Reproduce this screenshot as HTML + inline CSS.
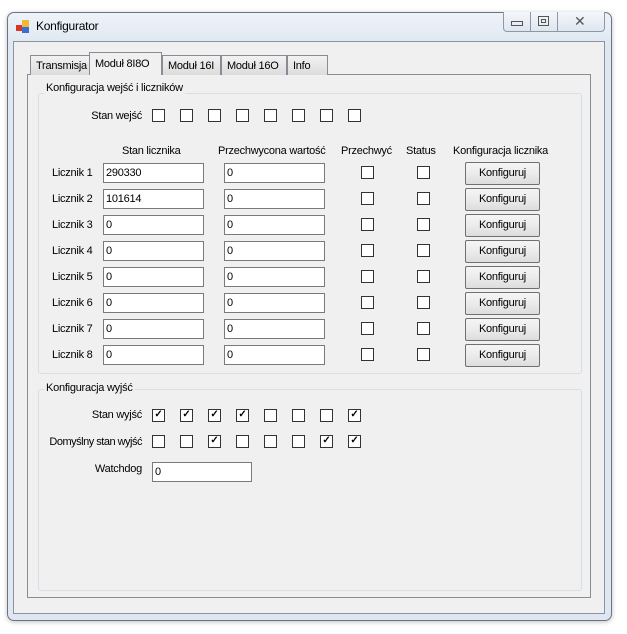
<!DOCTYPE html>
<html><head><meta charset="utf-8"><style>
*{margin:0;padding:0;box-sizing:border-box}
body{width:627px;height:634px;background:#fff;font-family:"Liberation Sans",sans-serif;font-size:11px;letter-spacing:-0.25px;color:#000;position:relative;overflow:hidden}
.a{position:absolute;white-space:nowrap}
.win{left:7px;top:12px;width:605px;height:609px;border:1px solid #6b7480;border-radius:7px;background:linear-gradient(#eef3f9,#dfe8f2 30px,#dfe8f2);box-shadow:0 1px 5px rgba(0,0,0,.25)}
.client{left:13px;top:41px;width:592px;height:573px;border:1px solid #8d949c;background:#f0f0f0}
.panel{left:27px;top:74px;width:564px;height:524px;border:1px solid #898c95;background:#f0f0f0}
.gb{border:1px solid #d5dfe5;border-radius:3px}
.gt{background:#f0f0f0;padding:0 2px;line-height:13px}
.tab{top:55px;height:20px;border:1px solid #898c95;border-bottom:none;background:linear-gradient(#f2f2f2,#dcdcdc);padding:4px 0 0 5px;line-height:13px}
.sel{top:52px;height:23px;background:#f0f0f0;padding-top:5px}
.cb{width:13px;height:13px;border:1px solid #333;background:#fff;font-size:10px;line-height:10px;text-align:center;font-weight:bold}
.tb{height:20px;border:1px solid #7a7a7a;background:#fff;padding:2px 0 0 2px;line-height:14px}
.bt{width:75px;height:23px;border:1px solid #707070;background:linear-gradient(#f5f5f5,#ebebeb 50%,#dddddd);text-align:center;line-height:20px;border-radius:2px}
.lb{line-height:13px;text-align:right}
</style></head><body>
<div class="a win"></div>
<div class="a" style="left:16px;top:20px;width:14px;height:14px">
<div class="a" style="left:0;top:5px;width:6px;height:6px;background:#d9352a"></div>
<div class="a" style="left:6px;top:0;width:7px;height:7px;background:#f1b931"></div>
<div class="a" style="left:6px;top:7px;width:7px;height:6px;background:#3a6fd0"></div>
</div>
<div class="a" style="left:36px;top:19px;font-size:12px;line-height:15px">Konfigurator</div>
<div class="a" style="left:503px;top:12px;width:102px;height:20px;border:1px solid #8e97a3;border-top:none;border-radius:0 0 4px 4px;background:linear-gradient(#f4f7fb,#dfe6ef)"></div>
<div class="a" style="left:530px;top:12px;width:1px;height:19px;background:#8e97a3"></div>
<div class="a" style="left:557px;top:12px;width:1px;height:19px;background:#8e97a3"></div>
<div class="a" style="left:511px;top:21px;width:12px;height:5px;border:1px solid #555"></div>
<div class="a" style="left:538px;top:16px;width:11px;height:10px;border:1px solid #555"><div class="a" style="left:2px;top:2px;width:5px;height:4px;border:1px solid #555"></div></div>
<div class="a" style="left:574px;top:13px;font-size:14px;color:#555;line-height:16px">✕</div>
<div class="a client"></div>
<div class="a panel"></div>
<div class="a tab" style="left:30px;width:60px">Transmisja</div>
<div class="a tab" style="left:162px;width:59px">Moduł 16I</div>
<div class="a tab" style="left:221px;width:66px">Moduł 16O</div>
<div class="a tab" style="left:287px;width:41px">Info</div>
<div class="a tab sel" style="left:89px;width:73px">Moduł 8I8O</div>

<div class="a gb" style="left:38px;top:93px;width:544px;height:281px"></div>
<div class="a gt" style="left:44px;top:82px">Konfiguracja wejść i liczników</div>
<div class="a gb" style="left:38px;top:389px;width:544px;height:202px"></div>
<div class="a gt" style="left:44px;top:382px">Konfiguracja wyjść</div>

<div class="a lb" style="left:60px;top:110px;width:82px">Stan wejść</div>
<div class="a cb" style="left:152px;top:109px"></div><div class="a cb" style="left:180px;top:109px"></div><div class="a cb" style="left:208px;top:109px"></div><div class="a cb" style="left:236px;top:109px"></div><div class="a cb" style="left:264px;top:109px"></div><div class="a cb" style="left:292px;top:109px"></div><div class="a cb" style="left:320px;top:109px"></div><div class="a cb" style="left:348px;top:109px"></div>

<div class="a" style="left:122px;top:145px">Stan licznika</div>
<div class="a" style="left:218px;top:145px">Przechwycona wartość</div>
<div class="a" style="left:341px;top:145px">Przechwyć</div>
<div class="a" style="left:406px;top:145px">Status</div>
<div class="a" style="left:453px;top:145px">Konfiguracja licznika</div>

<div class="a" style="left:52px;top:167px">Licznik 1</div><div class="a tb" style="left:103px;top:163px;width:101px">290330</div><div class="a tb" style="left:224px;top:163px;width:101px">0</div><div class="a cb" style="left:361px;top:166px"></div><div class="a cb" style="left:417px;top:166px"></div><div class="a bt" style="left:465px;top:162px">Konfiguruj</div>
<div class="a" style="left:52px;top:193px">Licznik 2</div><div class="a tb" style="left:103px;top:189px;width:101px">101614</div><div class="a tb" style="left:224px;top:189px;width:101px">0</div><div class="a cb" style="left:361px;top:192px"></div><div class="a cb" style="left:417px;top:192px"></div><div class="a bt" style="left:465px;top:188px">Konfiguruj</div>
<div class="a" style="left:52px;top:219px">Licznik 3</div><div class="a tb" style="left:103px;top:215px;width:101px">0</div><div class="a tb" style="left:224px;top:215px;width:101px">0</div><div class="a cb" style="left:361px;top:218px"></div><div class="a cb" style="left:417px;top:218px"></div><div class="a bt" style="left:465px;top:214px">Konfiguruj</div>
<div class="a" style="left:52px;top:245px">Licznik 4</div><div class="a tb" style="left:103px;top:241px;width:101px">0</div><div class="a tb" style="left:224px;top:241px;width:101px">0</div><div class="a cb" style="left:361px;top:244px"></div><div class="a cb" style="left:417px;top:244px"></div><div class="a bt" style="left:465px;top:240px">Konfiguruj</div>
<div class="a" style="left:52px;top:271px">Licznik 5</div><div class="a tb" style="left:103px;top:267px;width:101px">0</div><div class="a tb" style="left:224px;top:267px;width:101px">0</div><div class="a cb" style="left:361px;top:270px"></div><div class="a cb" style="left:417px;top:270px"></div><div class="a bt" style="left:465px;top:266px">Konfiguruj</div>
<div class="a" style="left:52px;top:297px">Licznik 6</div><div class="a tb" style="left:103px;top:293px;width:101px">0</div><div class="a tb" style="left:224px;top:293px;width:101px">0</div><div class="a cb" style="left:361px;top:296px"></div><div class="a cb" style="left:417px;top:296px"></div><div class="a bt" style="left:465px;top:292px">Konfiguruj</div>
<div class="a" style="left:52px;top:323px">Licznik 7</div><div class="a tb" style="left:103px;top:319px;width:101px">0</div><div class="a tb" style="left:224px;top:319px;width:101px">0</div><div class="a cb" style="left:361px;top:322px"></div><div class="a cb" style="left:417px;top:322px"></div><div class="a bt" style="left:465px;top:318px">Konfiguruj</div>
<div class="a" style="left:52px;top:349px">Licznik 8</div><div class="a tb" style="left:103px;top:345px;width:101px">0</div><div class="a tb" style="left:224px;top:345px;width:101px">0</div><div class="a cb" style="left:361px;top:348px"></div><div class="a cb" style="left:417px;top:348px"></div><div class="a bt" style="left:465px;top:344px">Konfiguruj</div>

<div class="a lb" style="left:20px;top:409px;width:122px">Stan wyjść</div>
<div class="a cb" style="left:152px;top:409px">✓</div><div class="a cb" style="left:180px;top:409px">✓</div><div class="a cb" style="left:208px;top:409px">✓</div><div class="a cb" style="left:236px;top:409px">✓</div><div class="a cb" style="left:264px;top:409px"></div><div class="a cb" style="left:292px;top:409px"></div><div class="a cb" style="left:320px;top:409px"></div><div class="a cb" style="left:348px;top:409px">✓</div>
<div class="a lb" style="left:20px;top:436px;width:122px;letter-spacing:-0.5px">Domyślny stan wyjść</div>
<div class="a cb" style="left:152px;top:435px"></div><div class="a cb" style="left:180px;top:435px"></div><div class="a cb" style="left:208px;top:435px">✓</div><div class="a cb" style="left:236px;top:435px"></div><div class="a cb" style="left:264px;top:435px"></div><div class="a cb" style="left:292px;top:435px"></div><div class="a cb" style="left:320px;top:435px">✓</div><div class="a cb" style="left:348px;top:435px">✓</div>
<div class="a lb" style="left:20px;top:463px;width:122px">Watchdog</div>
<div class="a tb" style="left:152px;top:462px;width:100px">0</div>
</body></html>
